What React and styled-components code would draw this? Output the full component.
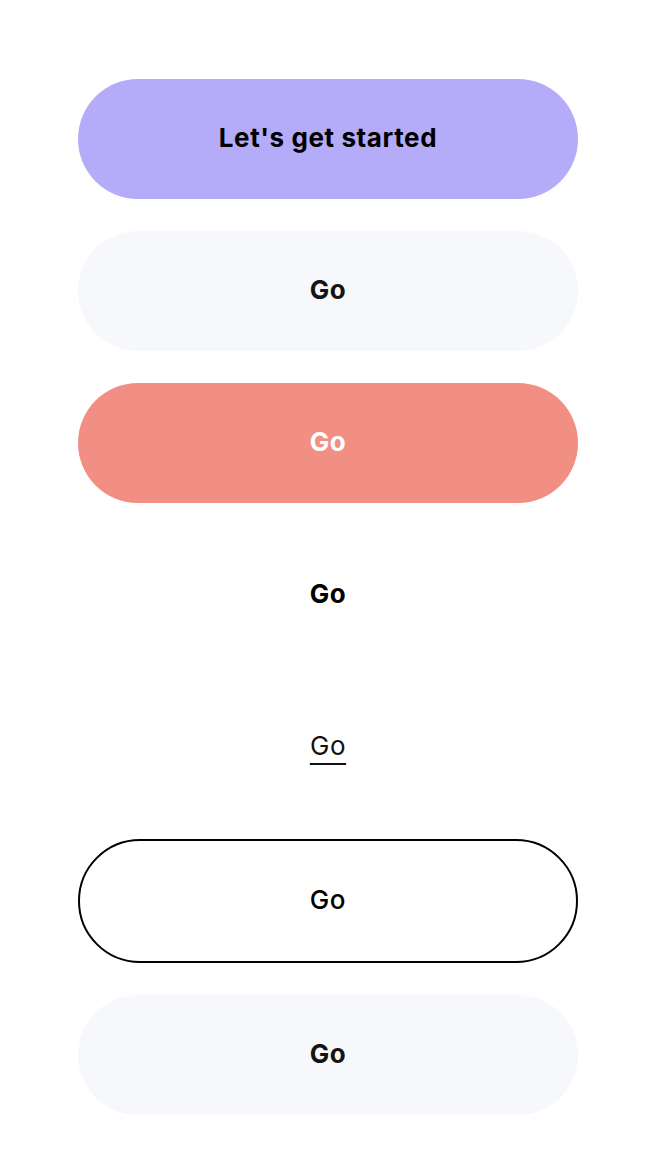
import React from "react";
import styled, { createGlobalStyle } from "styled-components";

const GlobalStyle = createGlobalStyle`
  html, body {
    margin: 0;
    padding: 0;
    background: #ffffff;
    font-family: Inter, "Noto Sans", sans-serif;
  }
`;

const Page = styled.div`
  display: flex;
  flex-direction: column;
  align-items: flex-start;
  gap: 32px;
  padding: 79px 0 55px 78px;
`;

const variants = {
  primary: "background: #b4acf9; color: #000000; font-weight: 700;",
  secondary: "background: #f7f8fc; color: #141414; font-weight: 700;",
  danger: "background: #f18f84; color: #ffffff; font-weight: 700;",
  text: "background: transparent; color: #000000; font-weight: 700;",
  outline:
    "background: #ffffff; color: #000000; font-weight: 500; border: 2px solid #000000; height: 124px;",
};

const Button = styled.button`
  display: flex;
  align-items: center;
  justify-content: center;
  box-sizing: border-box;
  width: 500px;
  height: 120px;
  padding: 0 0 3px;
  border: none;
  border-radius: 62px;
  font-family: Inter, "Noto Sans", sans-serif;
  font-size: 26px;
  letter-spacing: 0.6px;
  cursor: pointer;
  outline: none;
  ${({ $variant }) => variants[$variant]}
`;

const LinkButton = styled(Button)`
  background: transparent;
  color: #111111;
  font-weight: 400;
`;

const Underlined = styled.span`
  text-decoration: underline;
  text-decoration-thickness: 2px;
  text-underline-offset: 8px;
`;

const App = () => {
  return (
    <>
      <GlobalStyle />
      <Page>
        <Button $variant="primary">Let's get started</Button>
        <Button $variant="secondary">Go</Button>
        <Button $variant="danger">Go</Button>
        <Button $variant="text">Go</Button>
        <LinkButton>
          <Underlined>Go</Underlined>
        </LinkButton>
        <Button $variant="outline">Go</Button>
        <Button $variant="secondary">Go</Button>
      </Page>
    </>
  );
};

export default App;
